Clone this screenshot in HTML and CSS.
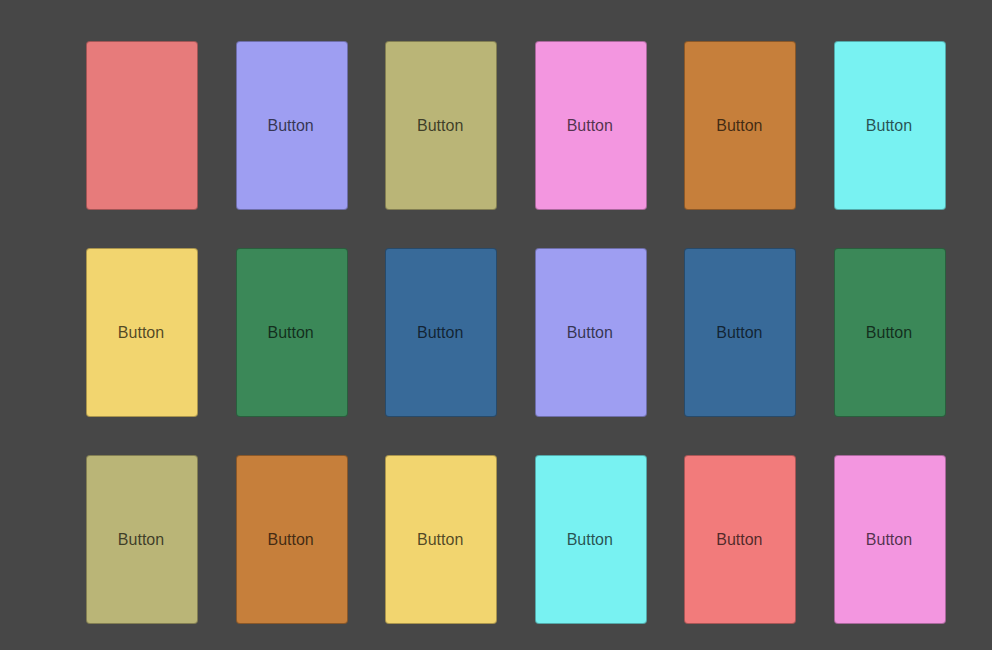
FILE: index.html
```html
<!DOCTYPE html>
<html>
<head>
<meta charset="utf-8">
<link rel="stylesheet" href="styles.css">
</head>
<body>
<div class="grid">
  <div class="btn red"></div>
  <div class="btn lavender">Button</div>
  <div class="btn khaki">Button</div>
  <div class="btn pink">Button</div>
  <div class="btn orange">Button</div>
  <div class="btn cyan">Button</div>

  <div class="btn yellow">Button</div>
  <div class="btn green">Button</div>
  <div class="btn blue">Button</div>
  <div class="btn lavender">Button</div>
  <div class="btn blue">Button</div>
  <div class="btn green">Button</div>

  <div class="btn khaki">Button</div>
  <div class="btn orange">Button</div>
  <div class="btn yellow">Button</div>
  <div class="btn cyan">Button</div>
  <div class="btn salmon">Button</div>
  <div class="btn pink">Button</div>
</div>
</body>
</html>
```
FILE: styles.css
```css
html, body {
  margin: 0;
  padding: 0;
  background: #474747;
  width: 992px;
  height: 650px;
  overflow: hidden;
}
.grid {
  display: grid;
  grid-template-columns: repeat(6, 112px);
  grid-auto-rows: 169px;
  column-gap: 37.6px;
  row-gap: 38px;
  padding: 41px 0 0 86px;
}
.btn {
  box-sizing: border-box;
  border: 1px solid rgba(0, 0, 0, 0.3);
  border-radius: 4px;
  display: flex;
  align-items: center;
  justify-content: center;
  padding-right: 2px;
  font-family: "Liberation Sans", Arial, sans-serif;
  font-size: 16px;
  color: rgba(0, 0, 0, 0.68);
}
.red { background: #e77b7b; }
.lavender { background: #9e9ef2; }
.khaki { background: #bab577; }
.pink { background: #f396e0; }
.orange { background: #c67f3b; }
.cyan { background: #78f2f2; }
.yellow { background: #f2d56f; }
.green { background: #3b8858; }
.blue { background: #386a99; }
.salmon { background: #f27b7b; }
```
